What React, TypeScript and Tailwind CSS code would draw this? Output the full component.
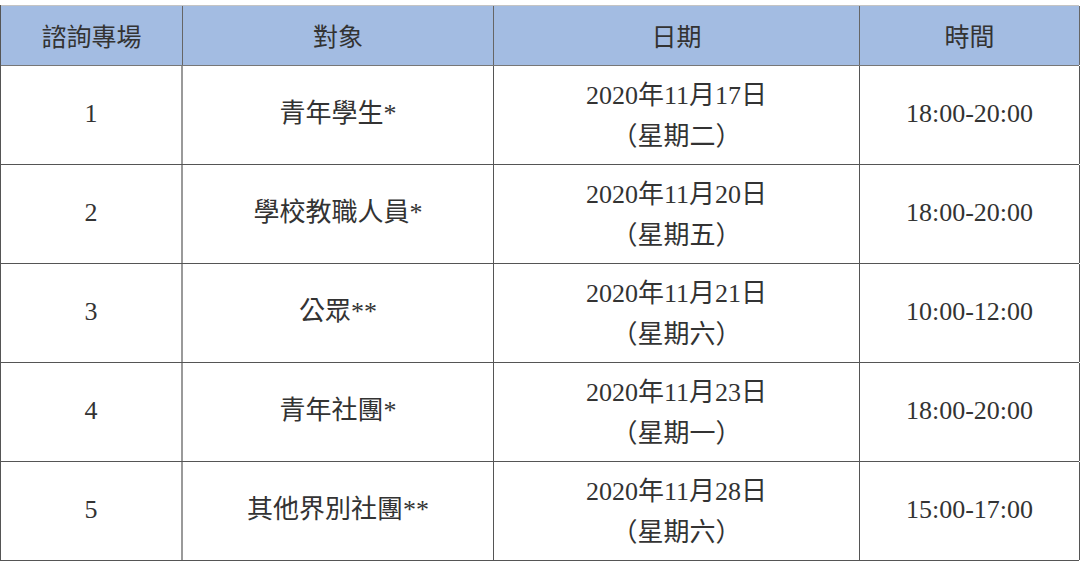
const rows = [
  { no: "1", who: "青年學生*", date: "2020年11月17日", day: "（星期二）", time: "18:00-20:00" },
  { no: "2", who: "學校教職人員*", date: "2020年11月20日", day: "（星期五）", time: "18:00-20:00" },
  { no: "3", who: "公眾**", date: "2020年11月21日", day: "（星期六）", time: "10:00-12:00" },
  { no: "4", who: "青年社團*", date: "2020年11月23日", day: "（星期一）", time: "18:00-20:00" },
  { no: "5", who: "其他界別社團**", date: "2020年11月28日", day: "（星期六）", time: "15:00-17:00" },
]

const font = "font-['Liberation_Serif','Noto_Sans_CJK_TC',serif]"

export default function App() {
  return (
    <main className={`w-[1080px] h-[561px] bg-white pt-[5px] text-[#333] ${font}`}>
      <div className="w-[1079px] border-l border-[#555]">
        {/* header */}
        <div className="grid grid-cols-[182px_311px_366px_220px] h-[61px] bg-[#a3bce2] border-t border-b border-t-[#c4c4c4] border-b-[#777] text-[25px] font-['Noto_Sans_CJK_TC',sans-serif]">
          <div className="flex items-center justify-center border-r border-[#666]">諮詢專場</div>
          <div className="flex items-center justify-center border-r border-[#666]">對象</div>
          <div className="flex items-center justify-center border-r border-[#666]">日期</div>
          <div className="flex items-center justify-center border-r border-[#666]">時間</div>
        </div>

        {rows.map((r) => (
          <div key={r.no} className="grid grid-cols-[182px_311px_366px_220px] h-[99px] border-b border-[#555] text-[26px]">
            <div className="flex items-center justify-center border-r-2 border-[#9a9a9a] pb-[4px]">{r.no}</div>
            <div className="flex items-center justify-center border-r border-[#555] pb-[4px]">{r.who}</div>
            <div className="flex flex-col items-center justify-center border-r border-[#555] leading-[41px] pt-[1px]">
              <span>{r.date}</span>
              <span>{r.day}</span>
            </div>
            <div className="flex items-center justify-center border-r border-[#555] pb-[4px]">{r.time}</div>
          </div>
        ))}
      </div>
    </main>
  )
}
